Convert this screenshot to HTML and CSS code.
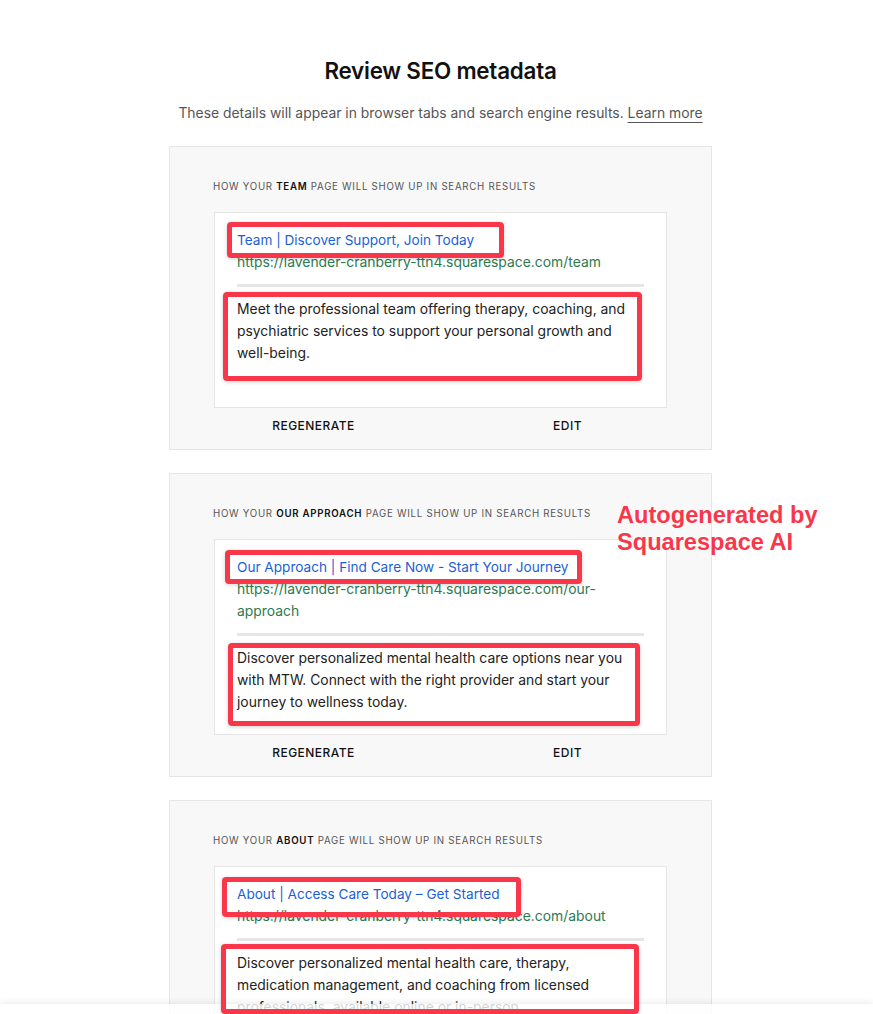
FILE: index.html
```html
<!DOCTYPE html>
<html lang="en">
<head>
<meta charset="utf-8">
<title>Review SEO metadata</title>
<link rel="stylesheet" href="styles.css">
</head>
<body>
<div class="page">
  <h1 class="title">Review SEO metadata</h1>
  <p class="subtitle">These details will appear in browser tabs and search engine results. <a class="learn" href="#">Learn more</a></p>

  <section class="card">
    <div class="label">HOW YOUR <strong>TEAM</strong> PAGE WILL SHOW UP IN SEARCH RESULTS</div>
    <div class="preview">
      <div class="p-title">Team | Discover Support, Join Today</div>
      <div class="p-url">https://lavender-cranberry-ttn4.squarespace.com/team</div>
      <div class="divider"></div>
      <div class="p-desc">Meet the professional team offering therapy, coaching, and psychiatric services to support your personal growth and well-being.</div>
      <div class="mark mark-t1"></div>
      <div class="mark mark-d1"></div>
    </div>
    <div class="actions">
      <button class="btn">REGENERATE</button>
      <button class="btn">EDIT</button>
    </div>
  </section>

  <section class="card">
    <div class="label">HOW YOUR <strong>OUR APPROACH</strong> PAGE WILL SHOW UP IN SEARCH RESULTS</div>
    <div class="preview">
      <div class="p-title">Our Approach | Find Care Now - Start Your Journey</div>
      <div class="p-url">https://lavender-cranberry-ttn4.squarespace.com/our-approach</div>
      <div class="divider"></div>
      <div class="p-desc">Discover personalized mental health care options near you with MTW. Connect with the right provider and start your journey to wellness today.</div>
      <div class="mark mark-t2"></div>
      <div class="mark mark-d2"></div>
    </div>
    <div class="actions">
      <button class="btn">REGENERATE</button>
      <button class="btn">EDIT</button>
    </div>
  </section>

  <section class="card">
    <div class="label">HOW YOUR <strong>ABOUT</strong> PAGE WILL SHOW UP IN SEARCH RESULTS</div>
    <div class="preview">
      <div class="p-title">About | Access Care Today – Get Started</div>
      <div class="p-url">https://lavender-cranberry-ttn4.squarespace.com/about</div>
      <div class="divider"></div>
      <div class="p-desc">Discover personalized mental health care, therapy, medication management, and coaching from licensed professionals, available online or in-person.</div>
      <div class="mark mark-t3"></div>
      <div class="mark mark-d3"></div>
    </div>
    <div class="actions">
      <button class="btn">REGENERATE</button>
      <button class="btn">EDIT</button>
    </div>
  </section>

  <div class="note">Autogenerated by<br>Squarespace AI</div>
</div>
<div class="footer-fade"></div>
</body>
</html>
```

FILE: styles.css
```css
* { box-sizing: border-box; }
html, body { margin: 0; padding: 0; background: #fff; }
body {
  font-family: Inter, "Noto Sans", "Liberation Sans", sans-serif;
  color: #222;
}
.page {
  position: relative;
  width: 543px;
  margin-left: 169px;
  padding-top: 57px;
  padding-bottom: 40px;
}
.title {
  margin: 0;
  font-size: 22.4px;
  line-height: 28px;
  font-weight: 600;
  text-align: center;
  color: #111;
  letter-spacing: -0.01em;
}
.subtitle {
  margin: 18px -30px 23px;
  font-size: 13.9px;
  line-height: 20px;
  text-align: center;
  color: #555;
}
.learn {
  color: #555;
  text-decoration: underline;
  text-underline-offset: 4px;
  text-decoration-thickness: 1px;
}
.card {
  background: #f8f8f8;
  border: 1px solid #e6e6e6;
  padding: 33px 44px 7px;
  margin-bottom: 23px;
}
.label {
  font-size: 9.7px;
  line-height: 14px;
  letter-spacing: 0.075em;
  color: #555;
  margin-bottom: 18px;
  margin-left: -1px;
}
.label strong { color: #111; font-weight: 600; }
.preview {
  position: relative;
  height: 196px;
  background: #fff;
  border: 1px solid #e6e6e6;
  padding: 16px 22px 0;
}
.p-title {
  font-size: 13.6px;
  line-height: 22px;
  color: #1a5fd6;
}
.p-url {
  font-size: 13.9px;
  line-height: 22px;
  color: #2e7a50;
}
.divider {
  height: 3px;
  background: #e6e6e6;
  margin: 11px 0;
}
.p-desc {
  font-size: 13.9px;
  line-height: 22px;
  color: #222;
}
.actions {
  display: flex;
  justify-content: center;
  height: 34px;
  margin: 0 -44px;
}
.btn {
  flex: 0 0 254px;
  width: 254px;
  background: none;
  border: 0;
  padding: 0;
  font-family: inherit;
  font-size: 12px;
  font-weight: 500;
  letter-spacing: 0.04em;
  color: #111;
  cursor: pointer;
}
.mark {
  position: absolute;
  border: 5px solid #f8374a;
  border-radius: 4px;
  box-shadow: 0 1px 4px rgba(0,0,0,0.18);
  z-index: 5;
}
.mark-t1 { left: 12px; top: 9px; width: 277px; height: 36px; }
.mark-d1 { left: 8px; top: 79px; width: 419px; height: 89px; }
.mark-t2 { left: 10px; top: 10px; width: 357px; height: 34px; }
.mark-d2 { left: 13px; top: 103px; width: 412px; height: 83px; }
.mark-t3 { left: 7px; top: 10px; width: 299px; height: 40px; }
.mark-d3 { left: 6px; top: 77px; width: 418px; height: 70px; }
.note {
  position: absolute;
  left: 448px;
  top: 502px;
  width: 280px;
  font-family: "Liberation Sans", Arial, sans-serif;
  font-weight: 700;
  font-size: 23.6px;
  line-height: 27px;
  color: #f8374a;
  text-shadow: 0 0 3px #fff, 0 0 3px #fff;
  z-index: 6;
}
.footer-fade {
  position: fixed;
  left: 0;
  right: 0;
  bottom: 0;
  height: 10px;
  background: rgba(255,255,255,0.8);
  box-shadow: 0 -2px 6px rgba(0,0,0,0.07);
  z-index: 3;
}
```
